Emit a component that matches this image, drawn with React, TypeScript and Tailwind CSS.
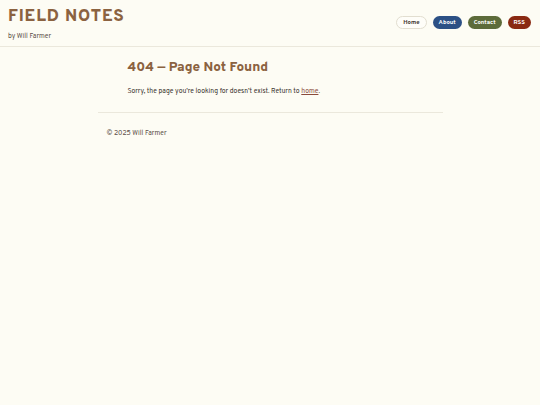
import React from "react";

export default function App() {
  const font = { fontFamily: '"Overpass", Lato, "Open Sans", sans-serif' };
  return (
    <div className="min-h-[405px] w-full bg-[#fdfcf4] text-[#4a3f38]" style={font}>
      <header className="flex items-start justify-between border-b border-[#ebe8dc] px-2 pt-[7px] h-[47px]">
        <div>
          <div className="text-[17px] font-extrabold leading-[20px] tracking-[0.85px] text-[#8b6240]">FIELD NOTES</div>
          <div className="mt-[6px] text-[6.8px] leading-[8px] text-[#5b4f47]">by Will Farmer</div>
        </div>
        <nav className="mt-[9px] flex items-center gap-[6px] pr-[1px] text-[6px] font-bold">
          <span className="flex h-[13px] items-center rounded-full border border-[#e2ded0] bg-[#fefdf8] px-[6px] text-[#3a332e]">Home</span>
          <span className="flex h-[13px] items-center rounded-full bg-[#2c5085] px-[6px] text-white">About</span>
          <span className="flex h-[13px] items-center rounded-full bg-[#5d6b3a] px-[6px] text-white">Contact</span>
          <span className="flex h-[13px] items-center rounded-full bg-[#8a2a12] px-[6px] text-white">RSS</span>
        </nav>
      </header>
      <div className="mx-auto w-[345px]">
        <main className="border-b border-[#ebe8dc] px-[30px] pt-[12px] pb-[15px]">
          <h1 className="text-[13.5px] font-extrabold leading-[18px] text-[#8b6240]">404 — Page Not Found</h1>
          <p className="mt-[10px] text-[6.8px] leading-[10px] text-[#3a332e]">
            Sorry, the page you’re looking for doesn’t exist. Return to{" "}
            <a className="text-[#8a4a3a] underline">home</a>.
          </p>
        </main>
        <footer className="px-[9px] pt-[16px] text-[6.8px] leading-[10px] text-[#5b4f47]">© 2025 Will Farmer</footer>
      </div>
    </div>
  );
}
